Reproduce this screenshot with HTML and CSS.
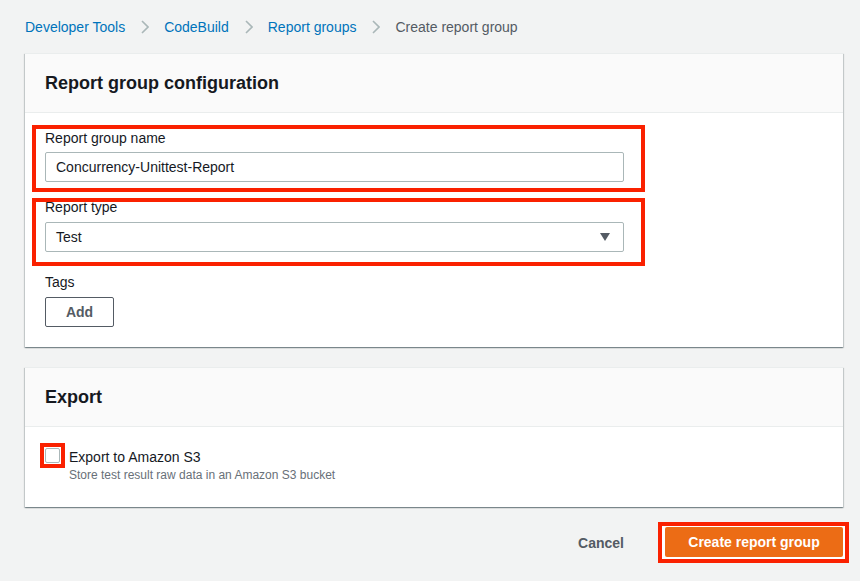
FILE: index.html
```html
<!DOCTYPE html>
<html lang="en">
<head>
<meta charset="utf-8">
<title>Create report group</title>
<link rel="stylesheet" href="styles.css">
</head>
<body>
<nav class="crumbs">
  <a class="crumb-link">Developer Tools</a>
  <span class="sep"><svg width="8" height="14" viewBox="0 0 8 14"><path d="M1 1l6 6-6 6" fill="none" stroke="#aab7b8" stroke-width="1.6"/></svg></span>
  <a class="crumb-link">CodeBuild</a>
  <span class="sep"><svg width="8" height="14" viewBox="0 0 8 14"><path d="M1 1l6 6-6 6" fill="none" stroke="#aab7b8" stroke-width="1.6"/></svg></span>
  <a class="crumb-link">Report groups</a>
  <span class="sep"><svg width="8" height="14" viewBox="0 0 8 14"><path d="M1 1l6 6-6 6" fill="none" stroke="#aab7b8" stroke-width="1.6"/></svg></span>
  <span class="crumb-current">Create report group</span>
</nav>

<section class="panel">
  <header class="panel-head"><h2>Report group configuration</h2></header>
  <div class="panel-body config-body">
    <div class="hl field field-name">
      <label class="label">Report group name</label>
      <div class="input">Concurrency-Unittest-Report</div>
    </div>
    <div class="hl field field-type">
      <label class="label tight">Report type</label>
      <div class="input select">
        <span>Test</span>
        <svg class="caret" width="10" height="8" viewBox="0 0 10 8"><path d="M0 0h10L5 8z" fill="#545b64"/></svg>
      </div>
    </div>
    <div class="tags">
      <div class="label">Tags</div>
      <button class="btn-normal">Add</button>
    </div>
  </div>
</section>

<section class="panel panel-export">
  <header class="panel-head"><h2>Export</h2></header>
  <div class="panel-body export-body">
    <div class="check-row">
      <span class="hl-check"><span class="checkbox"></span></span>
      <div class="check-text">
        <div class="check-title">Export to Amazon S3</div>
        <div class="check-desc">Store test result raw data in an Amazon S3 bucket</div>
      </div>
    </div>
  </div>
</section>

<div class="actions">
  <button class="btn-link">Cancel</button>
  <span class="hl-btn"><button class="btn-primary">Create report group</button></span>
</div>
</body>
</html>
```

FILE: styles.css
```css
* { box-sizing: border-box; }
html, body {
  margin: 0;
  padding: 0;
  background: #f2f3f3;
  font-family: "Liberation Sans", Arial, sans-serif;
  font-size: 14px;
  color: #16191f;
}
body { width: 860px; height: 581px; overflow: hidden; }

.crumbs {
  display: flex;
  align-items: center;
  height: 20px;
  margin: 17px 0 0 25px;
  line-height: 20px;
}
.crumb-link { color: #0073bb; text-decoration: none; }
.crumb-current { color: #545b64; }
.sep { display: flex; align-items: center; margin: 0 15px 0 16px; }

.panel {
  margin: 16px 17px 0 25px;
  background: #fff;
  border-top: 1px solid #eaeded;
  box-shadow: 0 1px 1px 0 rgba(0,28,36,.3), 1px 1px 1px 0 rgba(0,28,36,.15), -1px 1px 1px 0 rgba(0,28,36,.15);
}
.panel-export { margin-top: 20px; }
.panel-head {
  background: #fafafa;
  border-bottom: 1px solid #eaeded;
  height: 59px;
  display: flex;
  align-items: center;
  padding: 0 20px;
}
.panel-head h2 {
  margin: 0;
  font-size: 18px;
  font-weight: 700;
  line-height: 22px;
  color: #16191f;
}

.config-body { padding: 12px 0 20px 7px; }
.hl {
  width: 613px;
  border: 4px solid #fa2100;
  padding: 0 17px 0 9px;
}
.field-name { padding-bottom: 6px; }
.field-type { margin-top: 6px; padding-bottom: 10px; }
.label { display: block; line-height: 18px; margin-bottom: 5px; }
.label.tight { line-height: 16px; margin-top: -3px; margin-bottom: 7px; }
.input {
  height: 30px;
  border: 1px solid #aab7b8;
  border-radius: 2px;
  padding: 0 10px;
  display: flex;
  align-items: center;
  color: #16191f;
  background: #fff;
}
.select { justify-content: space-between; padding-right: 13px; }
.caret { display: block; }

.tags { padding-left: 13px; margin-top: 6px; }
.tags .label { line-height: 20px; margin-bottom: 5px; }
.btn-normal {
  font-family: inherit;
  font-size: 14px;
  font-weight: 700;
  color: #545b64;
  background: #fff;
  border: 1px solid #545b64;
  border-radius: 2px;
  height: 30px;
  width: 69px;
  padding: 0;
}

.export-body { padding: 16px 20px 24px 15px; }
.check-row { display: flex; align-items: flex-start; }
.hl-check {
  border: 4px solid #fa2100;
  width: 25px;
  height: 25px;
  padding: 1px;
  margin-right: 4px;
  display: flex;
}
.checkbox {
  width: 15px;
  height: 15px;
  border: 1px solid #aab7b8;
  border-radius: 2px;
  background: #fff;
}
.check-text { margin-top: 4px; }
.check-title { line-height: 20px; }
.check-desc { font-size: 12px; line-height: 16px; color: #687078; }

.actions {
  display: flex;
  justify-content: flex-end;
  align-items: center;
  margin: 15px 11px 0 0;
}
.btn-link {
  font-family: inherit;
  font-size: 14px;
  font-weight: 700;
  color: #545b64;
  background: none;
  border: none;
  padding: 4px 20px;
  margin-right: 14px;
}
.hl-btn {
  border: 4px solid #fa2100;
  background: #fff;
  padding: 1px 2px 2px 3px;
  display: flex;
}
.btn-primary {
  font-family: inherit;
  font-size: 14px;
  font-weight: 700;
  color: #fff;
  background: #ec6c15;
  border: none;
  border-radius: 2px;
  height: 30px;
  width: 178px;
  padding: 0;
}
```
